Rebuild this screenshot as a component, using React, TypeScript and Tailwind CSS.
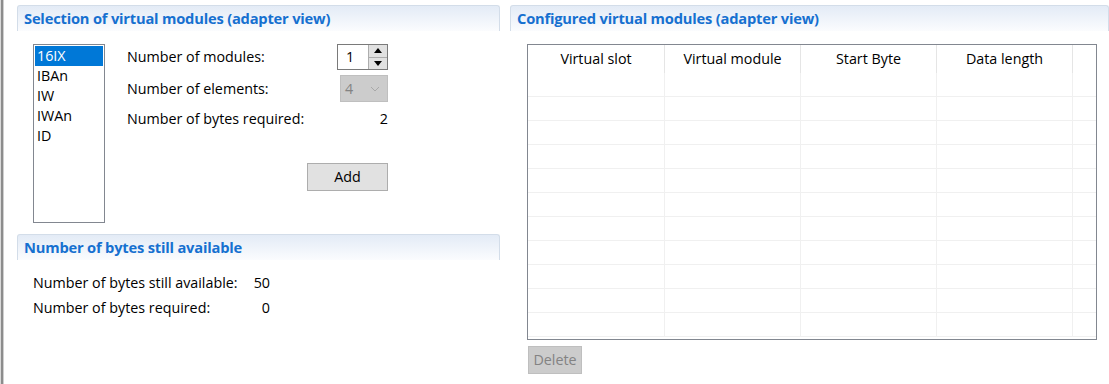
import React from "react";

const font = { fontFamily: '"Open Sans", "Noto Sans", sans-serif' };

function SectionHeader({ title }: { title: string }) {
  return (
    <div className="h-[26px] flex items-center px-[6px] rounded-t-[3px] border border-b-0 border-[#d3dde9] bg-gradient-to-b from-[#e3ebf6] to-[#fbfcfe]">
      <span className="text-[14.7px] font-bold text-[#1670d0] tracking-[-0.2px]">{title}</span>
    </div>
  );
}

function ListBox() {
  const items = ["16IX", "IBAn", "IW", "IWAn", "ID"];
  return (
    <div className="w-[72px] h-[179px] border border-[#828790] bg-white p-[1px] shrink-0">
      {items.map((it, i) => (
        <div
          key={it}
          className={`h-[20px] leading-[20px] pl-[2px] text-[14.3px] ${i === 0 ? "bg-[#0078d7] text-white" : "text-black"}`}
        >
          {it}
        </div>
      ))}
    </div>
  );
}

function Spinner() {
  return (
    <div className="w-[51px] h-[26px] flex border border-[#7a7a7a] bg-white">
      <div className="flex-1 flex items-center pl-[8px] text-[14.3px]">1</div>
      <div className="w-[19px] flex flex-col border-l border-[#adadad] bg-[#e1e1e1]">
        <div className="flex-1 flex items-center justify-center border-b border-[#adadad]">
          <svg width="8" height="5" viewBox="0 0 8 5"><path d="M0 5 L4 0 L8 5 Z" fill="#000" /></svg>
        </div>
        <div className="flex-1 flex items-center justify-center">
          <svg width="8" height="5" viewBox="0 0 8 5"><path d="M0 0 L4 5 L8 0 Z" fill="#000" /></svg>
        </div>
      </div>
    </div>
  );
}

function Combo() {
  return (
    <div className="ml-[3px] w-[48px] h-[27px] flex items-center justify-between bg-[#cccccc] border border-[#bfbfbf] px-[4px]">
      <span className="text-[14.3px] text-[#838383]">4</span>
      <svg width="10" height="6" viewBox="0 0 10 6" className="mr-[3px]">
        <path d="M1 1 L5 5 L9 1" stroke="#a8a8a8" strokeWidth="1" fill="none" />
      </svg>
    </div>
  );
}

function Table() {
  const cols = [
    { name: "Virtual slot", w: "w-[137px]" },
    { name: "Virtual module", w: "w-[136px]" },
    { name: "Start Byte", w: "w-[136px]" },
    { name: "Data length", w: "w-[136px]" },
  ];
  const rows = Array.from({ length: 11 });
  return (
    <div className="w-[570px] h-[296px] border border-[#828790] bg-white overflow-hidden">
      <div className="flex h-[28px]">
        {cols.map((c) => (
          <div key={c.name} className={`${c.w} shrink-0 border-r border-[#e5e5e5] flex items-center justify-center text-[14.3px]`}>
            {c.name}
          </div>
        ))}
      </div>
      {rows.map((_, i) => (
        <div key={i} className="flex h-[24px] border-b border-[#f0f0f0]">
          {cols.map((c) => (
            <div key={c.name} className={`${c.w} shrink-0 border-r border-[#f0f0f0]`} />
          ))}
        </div>
      ))}
    </div>
  );
}

export default function App() {
  return (
    <div className="w-[1109px] h-[384px] bg-white flex text-black overflow-hidden" style={font}>
      {/* window edge */}
      <div className="w-[7px] flex shrink-0">
        <div className="w-[1px] bg-[#d9d9d9]" />
        <div className="w-[2px] bg-[#8c8c8c]" />
        <div className="w-[1px] bg-[#cfcfcf]" />
      </div>

      {/* left column */}
      <div className="w-[493px] pl-[10px] pt-[5px] shrink-0">
        <SectionHeader title="Selection of virtual modules (adapter view)" />
        <div className="flex pl-[16px] pt-[13px]">
          <ListBox />
          <div className="ml-[22px] flex flex-col text-[14.3px]">
            <div className="flex items-center h-[26px]">
              <span className="w-[210px]">Number of modules:</span>
              <Spinner />
            </div>
            <div className="flex items-center h-[27px] mt-[5px]">
              <span className="w-[210px]">Number of elements:</span>
              <Combo />
            </div>
            <div className="flex items-center h-[20px] mt-[7px]">
              <span className="w-[210px]">Number of bytes required:</span>
              <span className="w-[51px] text-right">2</span>
            </div>
            <div className="flex justify-end mt-[34px]">
              <button className="w-[81px] h-[28px] bg-[#e1e1e1] border border-[#adadad]">Add</button>
            </div>
          </div>
        </div>

        <div className="mt-[11px]">
          <SectionHeader title="Number of bytes still available" />
        </div>
        <div className="pl-[16px] pt-[12px] grid grid-cols-[205px_32px] gap-y-[4px] text-[14.3px]">
          <span>Number of bytes still available:</span>
          <span className="text-right">50</span>
          <span>Number of bytes required:</span>
          <span className="text-right">0</span>
        </div>
      </div>

      {/* right column */}
      <div className="flex-1 pl-[10px] pt-[5px]">
        <SectionHeader title="Configured virtual modules (adapter view)" />
        <div className="pl-[17px] pt-[13px]">
          <Table />
          <button className="mt-[6px] ml-[1px] w-[54px] h-[28px] bg-[#cccccc] border border-[#bfbfbf] text-[14.3px] text-[#838383]">
            Delete
          </button>
        </div>
      </div>
    </div>
  );
}
